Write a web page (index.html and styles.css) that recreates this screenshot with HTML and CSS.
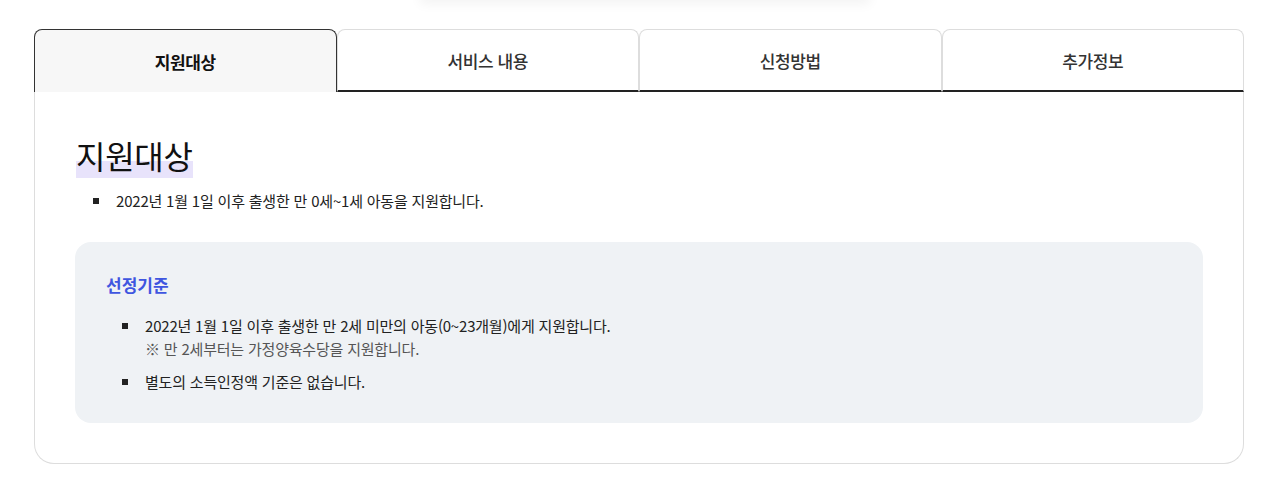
FILE: index.html
```html
<!DOCTYPE html>
<html lang="ko">
<head>
<meta charset="utf-8">
<link rel="stylesheet" href="styles.css">
</head>
<body>
<div class="page">
  <div class="glow"></div>
  <div class="tabs">
    <div class="tab active">지원대상</div>
    <div class="tab">서비스 내용</div>
    <div class="tab">신청방법</div>
    <div class="tab">추가정보</div>
  </div>
  <div class="panel">
    <h2 class="title"><span class="hl">지원대상</span></h2>
    <ul class="list">
      <li>2022년 1월 1일 이후 출생한 만 0세~1세 아동을 지원합니다.</li>
    </ul>
    <div class="box">
      <h3 class="box-title">선정기준</h3>
      <ul class="list inner">
        <li>2022년 1월 1일 이후 출생한 만 2세 미만의 아동(0~23개월)에게 지원합니다.<br><span class="note">※ 만 2세부터는 가정양육수당을 지원합니다.</span></li>
        <li>별도의 소득인정액 기준은 없습니다.</li>
      </ul>
    </div>
  </div>
</div>
</body>
</html>
```

FILE: styles.css
```css
* { box-sizing: border-box; }
html, body { margin: 0; padding: 0; background: #fff; }
body {
  font-family: "Noto Sans CJK KR", "Noto Sans", sans-serif;
  color: #222;
}
.page {
  position: relative;
  width: 1265px;
  padding: 29px 21px 0 34px;
}
.glow {
  position: absolute;
  top: -14px;
  left: 420px;
  width: 450px;
  height: 14px;
  box-shadow: 0 4px 12px rgba(0,0,0,0.05);
}
.tabs {
  display: flex;
}
.tab {
  flex: 1;
  height: 63px;
  display: flex;
  align-items: center;
  justify-content: center;
  font-size: 17px;
  font-weight: 500;
  color: #333;
  letter-spacing: -0.4px;
  border: 1px solid #ddd;
  border-bottom: 2px solid #222;
  border-radius: 8px 8px 0 0;
  background: #fff;
  padding-top: 1px;
}
.tab.active {
  background: #f7f7f7;
  border: 1px solid #333;
  border-bottom: none;
  font-weight: 700;
  color: #111;
}
.panel {
  border: 1px solid #ddd;
  border-top: none;
  border-radius: 0 0 20px 20px;
  padding: 43px 40px 40px 40px;
}
.title {
  margin: 0 0 14px 1px;
  font-size: 32px;
  font-weight: 400;
  line-height: 40px;
  letter-spacing: -0.3px;
  color: #111;
}
.hl {
  background: linear-gradient(transparent 62%, #e8e3fb 62%);
}
.list {
  list-style: none;
  margin: 0;
  padding: 0 0 0 41px;
}
.list li {
  position: relative;
  font-size: 15px;
  line-height: 23px;
  letter-spacing: -0.2px;
  color: #222;
}
.list li::before {
  content: "";
  position: absolute;
  left: -23px;
  top: 9px;
  width: 6px;
  height: 6px;
  background: #222;
}
.box {
  margin-top: 30px;
  background: #eff2f5;
  border-radius: 16px;
  padding: 32px 31px 30px;
}
.box-title {
  margin: 0 0 18px 0;
  font-size: 17px;
  font-weight: 700;
  line-height: 22px;
  color: #3f56e0;
  letter-spacing: 0;
}
.list.inner {
  padding-left: 39px;
}
.list.inner li + li {
  margin-top: 10px;
}
.note {
  color: #555;
}
```
